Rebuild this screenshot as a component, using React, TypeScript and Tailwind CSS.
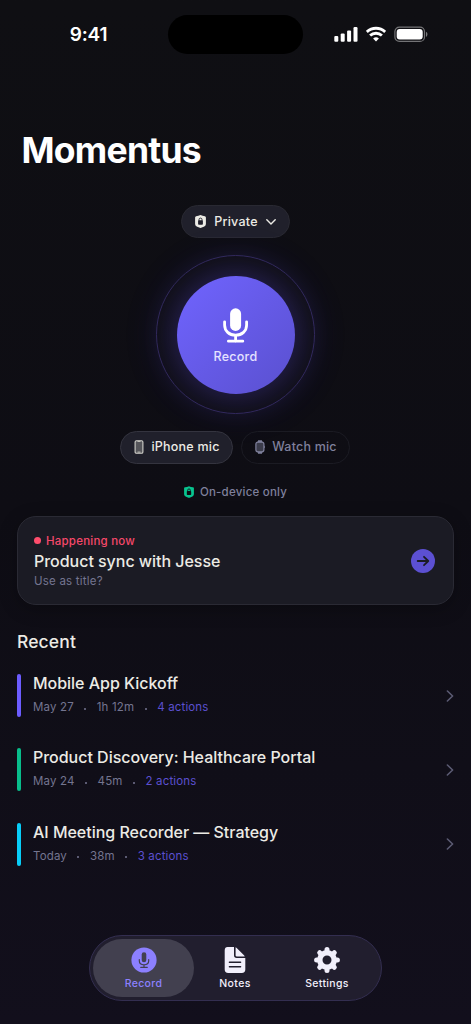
import type { ReactNode } from "react";

type Recording = {
  title: string;
  date: string;
  duration: string;
  actions: string;
  bar: string;
};

const recordings: Recording[] = [
  { title: "Mobile App Kickoff", date: "May 27", duration: "1h 12m", actions: "4 actions", bar: "bg-[#6c5cff]" },
  { title: "Product Discovery: Healthcare Portal", date: "May 24", duration: "45m", actions: "2 actions", bar: "bg-[#08bd8b]" },
  { title: "AI Meeting Recorder — Strategy", date: "Today", duration: "38m", actions: "3 actions", bar: "bg-[#08cdf8]" },
];

function ShieldLock({ className, lock }: { className: string; lock: string }) {
  return (
    <svg viewBox="0 0 11 13" className={className} fill="none">
      <path d="M5.5 0.1Q7.6 1.1 9.9 1.3Q10.9 1.5 10.9 2.5V9Q10.9 10.7 9.3 11.5L6.2 12.8Q5.5 13 4.8 12.8L1.7 11.5Q0.1 10.7 0.1 9V2.5Q0.1 1.5 1.1 1.3Q3.4 1.1 5.5 0.1Z" fill="currentColor" />
      <rect x="3.1" y="5.3" width="4.8" height="4.4" rx="0.8" fill={lock} />
      <path d="M4 5.8V4.6a1.5 1.5 0 0 1 3 0v1.2" stroke={lock} strokeWidth="0.9" />
    </svg>
  );
}

function Mic({ className }: { className: string }) {
  return (
    <svg viewBox="0 0 25 35" className={className} fill="none">
      <rect x="7.1" y="0.3" width="11" height="22.6" rx="5.5" fill="currentColor" />
      <path d="M1.6 13.8v3.2c0 6 4.6 10.2 11 10.2s11-4.2 11-10.2v-3.2M12.6 27.3v6M5.4 33.2h14.4" stroke="currentColor" strokeWidth="2.8" strokeLinecap="round" />
    </svg>
  );
}

function StatusBar() {
  return (
    <header className="flex h-[54px] items-start pt-[15px]">
      <div className="flex w-[168px] justify-center pt-[8px]">
        <span className="ml-[9px] text-[19px] font-semibold leading-6 tracking-[-0.2px] text-white">9:41</span>
      </div>
      <div className="h-[39px] w-[135px] rounded-full bg-black" />
      <div className="flex items-center gap-[8px] pl-[31px] pt-[11px] text-white">
        <svg viewBox="0 0 24 16" className="h-4 w-6" fill="currentColor">
          <rect x="0.3" y="10" width="4" height="5.8" rx="1.1" />
          <rect x="6.7" y="7.4" width="4" height="8.4" rx="1.1" />
          <rect x="13.1" y="4.4" width="4" height="11.4" rx="1.1" />
          <rect x="19.5" y="1.1" width="4" height="14.7" rx="1.1" />
        </svg>
        <svg viewBox="0 0 20 16" className="h-4 w-5" fill="none" stroke="currentColor" strokeWidth="2.9">
          <path d="M0.8 5.9C5.9 1 14.1 1 19.2 5.9" />
          <path d="M4.1 9.5C7.5 6.4 12.5 6.4 15.9 9.5" />
          <path d="M7.1 12.5Q10 10.1 12.9 12.5L10 15.5Z" fill="currentColor" stroke="none" />
        </svg>
        <svg viewBox="0 0 34 16" className="h-4 w-[34px]" fill="none">
          <rect x="0.9" y="1.1" width="29.6" height="14.3" rx="4.5" stroke="#ffffff" strokeOpacity="0.42" strokeWidth="1.2" />
          <rect x="2.7" y="2.9" width="26" height="10.7" rx="3" fill="currentColor" />
          <path d="M32 5.7c1.9.8 1.9 4.3 0 5.1Z" fill="#ffffff" fillOpacity="0.45" />
        </svg>
      </div>
    </header>
  );
}

function RecordButton() {
  return (
    <div className="mx-auto mt-[17px] flex size-[159px] items-center justify-center rounded-full border-[1.5px] border-[#302858] shadow-[0_0_36px_rgba(80,70,220,0.1)]">
      <button className="flex size-[118px] flex-col items-center rounded-full bg-linear-135 from-[#7064ff] to-[#5a50cf] pt-[32px] shadow-[0_0_36px_rgba(100,80,240,0.4)]">
        <Mic className="h-[35px] w-[25px] text-white" />
        <span className="mt-[6px] text-[12.5px] font-medium leading-4 tracking-[0.25px] text-[#e5e2ff]">Record</span>
      </button>
    </div>
  );
}

function HappeningCard() {
  return (
    <section className="mx-[17px] mt-[16px] flex h-[89px] items-center justify-between rounded-[19px] border border-[#2a2a34] bg-[#1b1b24] pl-[16px] pr-[18px] shadow-[0_4px_18px_rgba(0,0,0,0.25)]">
      <div className="flex flex-col">
        <div className="flex items-center gap-[5px] text-[#f6486a]">
          <span className="size-[7px] rounded-full bg-[#ff4d6c]" />
          <span className="text-[11.5px] font-medium leading-4 tracking-[0.22px]">Happening now</span>
        </div>
        <h2 className="text-[16px] font-medium leading-6 tracking-[-0.03px] text-[#ecebe5]">Product sync with Jesse</h2>
        <p className="text-[11.5px] leading-4 tracking-[0.22px] text-[#747590]">Use as title?</p>
      </div>
      <svg viewBox="0 0 24 24" className="size-6" fill="none">
        <circle cx="12" cy="12" r="12" fill="#5c50d2" />
        <path d="M6.7 12h10.6M13 7.8l4.3 4.2-4.3 4.2" stroke="#1b1b24" strokeWidth="1.8" strokeLinecap="round" strokeLinejoin="round" />
      </svg>
    </section>
  );
}

function RecordingRow({ item }: { item: Recording }) {
  return (
    <li className="flex h-[43px] items-center">
      <span className={`h-[43px] w-[3.5px] rounded-full ${item.bar}`} />
      <div className="-mt-[5px] ml-[12.5px] flex-1">
        <h3 className="text-[16px] font-medium leading-6 tracking-[-0.02px] text-[#ecebe5]">{item.title}</h3>
        <div className="mt-[4px] flex items-center text-[11.5px] leading-4 tracking-[0.15px] text-[#747590]">
          <span>{item.date}</span>
          <span className="mx-[10.5px] mt-[3px] size-[2px] rounded-full bg-[#747590]" />
          <span>{item.duration}</span>
          <span className="mx-[10.5px] mt-[3px] size-[2px] rounded-full bg-[#747590]" />
          <span className="text-[#5b50cf]">{item.actions}</span>
        </div>
      </div>
      <svg viewBox="0 0 8 12" className="h-3 w-2" fill="none" stroke="#5b5b73" strokeWidth="1.6" strokeLinecap="round" strokeLinejoin="round">
        <path d="M1.4 1 6.6 6l-5.2 5" />
      </svg>
    </li>
  );
}

function Tab({ label, active, children }: { label: string; active?: boolean; children: ReactNode }) {
  return (
    <button className={`flex h-[58px] flex-col items-center rounded-full pt-[8px] ${active ? "w-[101px] bg-[#42404f] text-[#8c80ff]" : "w-[92px] text-[#f1effb]"}`}>
      {children}
      <span className="mt-[3px] text-[10.5px] font-medium leading-4 tracking-[0.35px]">{label}</span>
    </button>
  );
}

export default function App() {
  return (
    <main className="flex h-[1024px] w-[471px] flex-col overflow-hidden bg-linear-to-b from-[#0f0f13] via-[#0e0d14] to-[#120f1c] font-['Inter',sans-serif]">
      <StatusBar />
      <h1 className="ml-[21.5px] mt-[75px] text-[35.5px] font-bold leading-[44px] tracking-[-0.75px] text-white">Momentus</h1>

      <button className="mx-auto mt-[32px] flex h-[33px] w-[109px] items-center justify-center rounded-full border border-[#292932] bg-[#20202b] text-[#ecebe5]">
        <ShieldLock className="h-[13px] w-[11px]" lock="#20202b" />
        <span className="ml-[8px] text-[12.5px] font-medium leading-4 tracking-[0.25px]">Private</span>
        <svg viewBox="0 0 10 6" className="ml-[8px] h-[6px] w-[10px]" fill="none" stroke="currentColor" strokeWidth="1.4" strokeLinecap="round" strokeLinejoin="round">
          <path d="M0.8 0.8 5 5l4.2-4.2" />
        </svg>
      </button>

      <RecordButton />

      <div className="mr-[1px] mt-[17px] flex justify-center gap-[8px]">
        <button className="flex h-[33px] w-[113px] items-center justify-center rounded-full border border-[#34343f] bg-[#20202b] pb-[1px] pl-[1px] text-[#ecebe5]">
          <svg viewBox="0 0 10 14" className="h-[14px] w-[10px]" fill="none">
            <rect x="1.1" y="0.7" width="7.8" height="12.6" rx="1.3" fill="#55555a" stroke="#d2d1cb" strokeWidth="1.1" />
            <path d="M3.5 1.4h3M3.5 12.1h3" stroke="#d2d1cb" strokeWidth="0.9" />
          </svg>
          <span className="ml-[7px] text-[12.5px] font-medium leading-4 tracking-[0.23px]">iPhone mic</span>
        </button>
        <button className="flex h-[33px] w-[109px] items-center justify-center rounded-full border border-[#1b1b23] pb-[1px] pl-[1px] text-[#7f809c]">
          <svg viewBox="0 0 10 14" className="h-[14px] w-[10px]" fill="none">
            <path d="M2.3 3 3.1.3h3.8L7.7 3M2.3 11l.8 2.7h3.8l.8-2.7" fill="#7f809c" />
            <rect x="0.9" y="2.2" width="8" height="9.6" rx="2" fill="#3b3c4b" stroke="#7f809c" strokeWidth="1.2" />
            <path d="M9.6 5.8v2.2" stroke="#7f809c" strokeWidth="0.8" />
          </svg>
          <span className="ml-[7px] text-[12.5px] font-medium leading-4 tracking-[0.2px]">Watch mic</span>
        </button>
      </div>

      <div className="mt-[20px] flex h-4 items-center justify-center text-[#7f809c]">
        <ShieldLock className="h-[12px] w-[10px] text-[#08c48f]" lock="#0e0d14" />
        <span className="ml-[6px] text-[11.5px] font-medium leading-4 tracking-[0.22px]">On-device only</span>
      </div>

      <HappeningCard />

      <section className="mx-[17px] mt-[25px]">
        <h2 className="text-[17.5px] font-medium leading-6 tracking-[0.12px] text-[#ecebe5]">Recent</h2>
        <ul className="mt-[20px] flex flex-col gap-[31.3px]">
          {recordings.map((item) => (
            <RecordingRow key={item.title} item={item} />
          ))}
        </ul>
      </section>

      <nav className="mx-auto mb-[23px] mt-auto flex h-[66px] w-[293px] items-center rounded-full border border-[#332e50] bg-[#211e2e] pl-[3px]">
        <Tab label="Record" active>
          <svg viewBox="0 0 26 26" className="size-[26px]" fill="none">
            <circle cx="13" cy="13" r="12.6" fill="#8c80ff" />
            <rect x="10.7" y="5.3" width="4.6" height="10" rx="2.3" fill="#42404f" />
            <path d="M8.3 12.6v1.2c0 2.4 1.9 4 4.7 4s4.7-1.6 4.7-4v-1.2M13 17.8v2.5M9.7 20.3h6.6" stroke="#42404f" strokeWidth="1.2" strokeLinecap="round" />
          </svg>
        </Tab>
        <div className="-ml-[5px] flex">
          <Tab label="Notes">
            <svg viewBox="0 0 22 26" className="h-[26px] w-[22px]" fill="none">
              <path d="M3.5 0H10v8.2c0 1.8.9 2.7 2.7 2.7h8.6v11.7c0 2.3-1.2 3.4-3.5 3.4H4.2C1.9 26 .7 24.9.7 22.6V3.4C.7 1.1 1.8 0 3.5 0Z" fill="currentColor" />
              <path d="M11.6.2c.6.2 1 .6 1.6 1.2l6.3 6.3c.6.6 1 1.1 1.2 1.7h-8c-.8 0-1.1-.4-1.1-1.1Z" fill="currentColor" />
              <path d="M5.4 15.3h11.2M5.4 19.8h11.2" stroke="#211e2e" strokeWidth="1.4" strokeLinecap="round" />
            </svg>
          </Tab>
          <Tab label="Settings">
            <svg viewBox="0 0 26 26" className="size-[26px]" fill="none">
              <circle cx="13" cy="13" r="7.2" stroke="currentColor" strokeWidth="5.4" />
              <g stroke="currentColor" strokeWidth="5" strokeLinecap="round">
                <path d="M13 2.6v2M13 21.4v2M2.6 13h2M21.4 13h2M5.7 5.7 7 7M19 19l1.3 1.3M5.7 20.3 7 19M19 7l1.3-1.3" />
              </g>
            </svg>
          </Tab>
        </div>
      </nav>
    </main>
  );
}
